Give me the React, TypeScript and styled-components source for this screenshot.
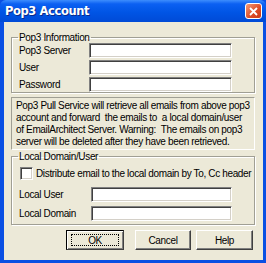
import styled, { createGlobalStyle } from "styled-components";

const Global = createGlobalStyle`
  html, body {
    margin: 0;
    padding: 0;
    background: #ffffff;
  }
  * {
    box-sizing: border-box;
  }
`;

const Window = styled.div`
  width: 266px;
  height: 263px;
  display: flex;
  flex-direction: column;
  background: #0a4fe3;
  font-family: "Liberation Sans", Arial, sans-serif;
  font-size: 10px;
  letter-spacing: -0.35px;
  color: #000;
`;

const TitleBar = styled.div`
  height: 22px;
  flex-shrink: 0;
  display: flex;
  align-items: center;
  justify-content: space-between;
  padding: 0 4px 0 5px;
  background: linear-gradient(#3d8dfd 0%, #0b60f2 18%, #0055e5 55%, #004ad6 100%);
  border-radius: 6px 6px 0 0;
`;

const Title = styled.span`
  color: #fff;
  font-weight: bold;
  font-size: 11.5px;
  font-family: "DejaVu Sans", sans-serif;
  letter-spacing: -0.4px;
  text-shadow: 1px 1px #0a2a8a;
`;

const CloseBtn = styled.div`
  width: 17px;
  height: 16px;
  border: 1px solid #fff;
  border-radius: 3px;
  background: linear-gradient(135deg, #f39a78, #dc4a24 60%, #c93a18);
  display: flex;
  align-items: center;
  justify-content: center;
`;

const Body = styled.div`
  flex: 1;
  margin: 0 3px 3px 4px;
  background: #ece9d8;
  padding: 10px 8px 0 7px;
  display: flex;
  flex-direction: column;
`;

const Group = styled.fieldset<{ $mt: number; $pb: number }>`
  margin: ${(p) => p.$mt}px 0 0 0;
  padding: 0 0 ${(p) => p.$pb}px 7px;
  border: 1px solid #a09f94;
  box-shadow: 1px 1px 0 #fff, inset 1px 1px 0 #fff;
  display: flex;
  flex-direction: column;
`;

const Legend = styled.legend`
  padding: 0 1px;
  margin-left: -1px;
  line-height: 11px;
`;

const Row = styled.div<{ $mt: number }>`
  display: flex;
  align-items: center;
  margin-top: ${(p) => p.$mt}px;
  height: 15px;
`;

const Label = styled.span<{ $w: number }>`
  width: ${(p) => p.$w}px;
  flex-shrink: 0;
`;

const Input = styled.div<{ $w: number }>`
  width: ${(p) => p.$w}px;
  height: 15px;
  background: #fff;
  border-top: 1px solid #808080;
  border-left: 1px solid #808080;
  border-bottom: 1px solid #fff;
  border-right: 1px solid #fff;
  box-shadow: inset 1px 1px 0 #404040, inset -1px -1px 0 #d4d0c8;
`;

const Note = styled.div`
  margin-top: 4px;
  height: 53px;
  padding: 2px 0 0 4px;
  border-top: 1px solid #a09f94;
  border-left: 1px solid #a09f94;
  border-bottom: 1px solid #fff;
  border-right: 1px solid #fff;
  line-height: 12px;
  white-space: pre;
  overflow: hidden;
`;

const CheckRow = styled.div`
  display: flex;
  align-items: center;
  gap: 3px;
  margin-top: 5px;
  margin-left: 1px;
  height: 13px;
`;

const Check = styled.span`
  width: 13px;
  height: 13px;
  flex-shrink: 0;
  background: #fff;
  border-top: 1px solid #808080;
  border-left: 1px solid #808080;
  border-bottom: 1px solid #fff;
  border-right: 1px solid #fff;
  box-shadow: inset 1px 1px 0 #404040, inset -1px -1px 0 #d4d0c8;
`;

const Buttons = styled.div`
  display: flex;
  margin-top: 5px;
  padding-left: 55px;
`;

const Button = styled.div<{ $w: number; $ml: number; $def?: boolean }>`
  width: ${(p) => p.$w}px;
  height: 20px;
  margin-left: ${(p) => p.$ml}px;
  display: flex;
  align-items: center;
  justify-content: center;
  background: #ece9d8;
  border-top: 1px solid ${(p) => (p.$def ? "#000" : "#fff")};
  border-left: 1px solid ${(p) => (p.$def ? "#000" : "#fff")};
  border-bottom: 1px solid #404040;
  border-right: 1px solid #404040;
  box-shadow: ${(p) =>
    p.$def
      ? "inset 1px 1px 0 #fff, inset -1px -1px 0 #808080"
      : "inset -1px -1px 0 #808080"};
`;

const Focus = styled.span`
  width: 48px;
  height: 12px;
  border: 1px dotted #000;
  display: flex;
  align-items: center;
  justify-content: center;
`;

const noteText = `Pop3 Pull Service will retrieve all emails from above pop3
account and forward  the emails to  a local domain/user
of EmailArchitect Server. Warning:  The emails on pop3
server will be deleted after they have been retrieved.`;

export default function App() {
  return (
    <>
      <Global />
      <Window>
        <TitleBar>
          <Title>Pop3 Account</Title>
          <CloseBtn>
            <svg width="9" height="9" viewBox="0 0 9 9">
              <path d="M1 1 L8 8 M8 1 L1 8" stroke="#fff" strokeWidth="1.8" />
            </svg>
          </CloseBtn>
        </TitleBar>
        <Body>
          <Group $mt={0} $pb={0}>
            <Legend>Pop3 Information</Legend>
            <Row $mt={0}>
              <Label $w={70}>Pop3 Server</Label>
              <Input $w={143} />
            </Row>
            <Row $mt={2}>
              <Label $w={70}>User</Label>
              <Input $w={143} />
            </Row>
            <Row $mt={2}>
              <Label $w={70}>Password</Label>
              <Input $w={143} />
            </Row>
          </Group>
          <Note>{noteText}</Note>
          <Group $mt={1} $pb={3}>
            <Legend>Local Domain/User</Legend>
            <CheckRow>
              <Check />
              <span>Distribute email to the local domain by To, Cc header</span>
            </CheckRow>
            <Row $mt={7}>
              <Label $w={72}>Local User</Label>
              <Input $w={141} />
            </Row>
            <Row $mt={4}>
              <Label $w={72}>Local Domain</Label>
              <Input $w={141} />
            </Row>
          </Group>
          <Buttons>
            <Button $w={58} $ml={0} $def>
              <Focus>OK</Focus>
            </Button>
            <Button $w={56} $ml={11}>Cancel</Button>
            <Button $w={57} $ml={5}>Help</Button>
          </Buttons>
        </Body>
      </Window>
    </>
  );
}
